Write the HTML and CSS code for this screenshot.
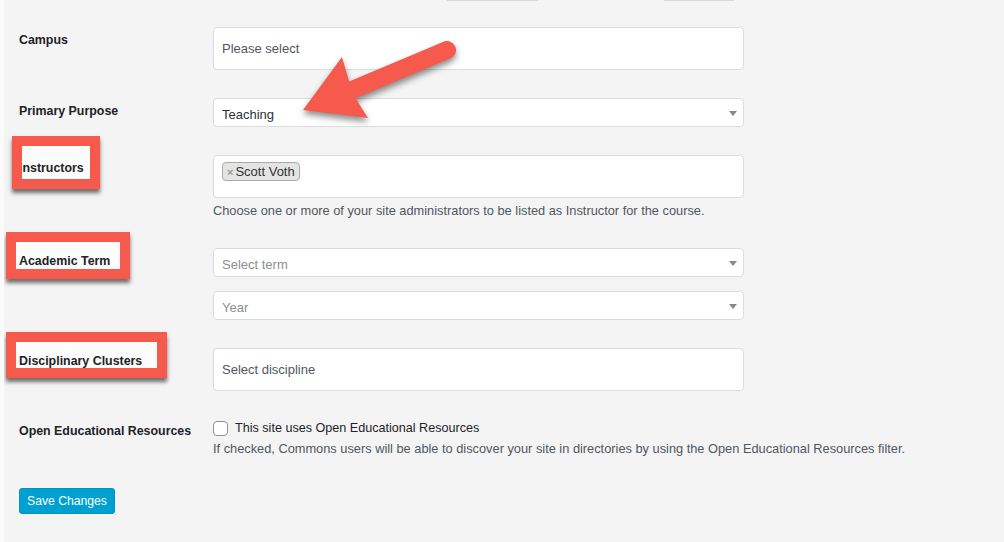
FILE: index.html
```html
<!DOCTYPE html>
<html lang="en">
<head>
    <meta charset="UTF-8">
    <meta name="viewport" content="width=device-width, initial-scale=1.0">
    <title>Course Settings</title>
    <link rel="stylesheet" href="styles.css">
</head>
<body>
    <div class="page">
        <div class="top-edges">
            <span class="edge edge-a"></span>
            <span class="edge edge-b"></span>
        </div>

        <form class="settings">
            <div class="row">
                <div class="label">Campus</div>
                <div class="field">
                    <div class="box tall"><span class="muted">Please select</span></div>
                </div>
            </div>

            <div class="row">
                <div class="label">Primary Purpose</div>
                <div class="field">
                    <div class="box select"><span class="value">Teaching</span><i class="caret"></i></div>
                </div>
            </div>

            <div class="row">
                <div class="label marked">
                    <span class="label-bg bg-instr"></span>
                    <span class="label-text">Instructors</span>
                    <span class="mark mark-instr"></span>
                </div>
                <div class="field">
                    <div class="box tall chips">
                        <span class="chip"><span class="chip-x">×</span>Scott Voth</span>
                    </div>
                    <p class="desc">Choose one or more of your site administrators to be listed as Instructor for the course.</p>
                </div>
            </div>

            <div class="row">
                <div class="label marked">
                    <span class="label-bg bg-term"></span>
                    <span class="label-text">Academic Term</span>
                    <span class="mark mark-term"></span>
                </div>
                <div class="field stack">
                    <div class="box select"><span class="placeholder">Select term</span><i class="caret"></i></div>
                    <div class="box select"><span class="placeholder">Year</span><i class="caret"></i></div>
                </div>
            </div>

            <div class="row">
                <div class="label marked">
                    <span class="label-bg bg-disc"></span>
                    <span class="label-text">Disciplinary Clusters</span>
                    <span class="mark mark-disc"></span>
                </div>
                <div class="field">
                    <div class="box tall"><span class="muted">Select discipline</span></div>
                </div>
            </div>

            <div class="row">
                <div class="label oer">Open Educational Resources</div>
                <div class="field">
                    <label class="check"><span class="checkbox"></span>This site uses Open Educational Resources</label>
                    <p class="desc desc-tight">If checked, Commons users will be able to discover your site in directories by using the Open Educational Resources filter.</p>
                </div>
            </div>

            <button type="button" class="save">Save Changes</button>
        </form>

        <svg class="arrow" width="1004" height="542" viewBox="0 0 1004 542">
            <line x1="447" y1="50" x2="352" y2="90" stroke="#f65a4d" stroke-width="18" stroke-linecap="round"/>
            <polygon points="303,110 342,57 349,81 356,99 368,118" fill="#f65a4d"/>
        </svg>
    </div>
</body>
</html>
```

FILE: styles.css
```css
* { box-sizing: border-box; }
body { margin: 0; background: #f4f4f4; font-family: "Liberation Sans", Arial, sans-serif; font-size: 13px; color: #1d2327; }
.page { position: relative; width: 1004px; height: 542px; overflow: hidden; border-left: 4px solid #fbfbfb; }

.top-edges { display: flex; height: 2px; }
.edge { display: block; height: 1px; background: #fff; border-bottom: 1px solid #d8d8d8; }
.edge-a { width: 91px; margin-left: 443px; }
.edge-b { width: 70px; margin-left: 126px; }

.settings { padding: 25px 0 0 15px; display: flex; flex-direction: column; gap: 28px; }
.row { display: grid; grid-template-columns: 194px 531px; }
.label { font-weight: bold; font-size: 12.4px; line-height: 18px; padding-top: 4px; white-space: nowrap; }
.label.oer { padding-top: 3px; }
.field { display: flex; flex-direction: column; }
.stack { gap: 14px; }

.box { background: #fff; border: 1px solid #dcdcde; border-radius: 4px; display: flex; align-items: center; padding: 0 8px; position: relative; }
.box.tall { height: 43px; }
.box.select { height: 29px; padding-top: 3px; }
.box.chips { align-items: flex-start; padding-top: 6px; }
.muted { color: #50575e; }
.placeholder { color: #8c8f94; }
.value { color: #2c3338; }
.caret { position: absolute; right: 6px; top: 12px; width: 0; height: 0; border-left: 4px solid transparent; border-right: 4px solid transparent; border-top: 5px solid #888; }

.chip { display: inline-flex; align-items: center; height: 19px; padding: 0 4px 0 4px; background: #e4e4e4; border: 1px solid #aaa; border-radius: 4px; color: #333; font-size: 13px; }
.chip-x { color: #999; font-size: 11px; font-weight: bold; margin-right: 2px; }

.desc { margin: 4px 0 0; color: #50575e; font-size: 12.8px; line-height: 18px; white-space: nowrap; }
.desc-tight { margin-top: 3px; }

.check { display: flex; align-items: center; gap: 7px; color: #1d2327; font-size: 12.6px; line-height: 18px; }
.checkbox { width: 15px; height: 15px; border: 1px solid #8c8f94; border-radius: 4px; background: #fff; }

.save { align-self: flex-start; margin-top: 2px; height: 26px; padding: 0 7px; background: #00a0d2; border: 1px solid #0094c2; border-radius: 3px; color: #fff; font-family: inherit; font-size: 12.2px; }

/* red annotation boxes */
.marked { position: relative; }
.label-text { position: relative; z-index: 1; }
.label-bg, .mark { position: absolute; }
.label-bg { background: #fcfcfc; z-index: 0; }
.mark { z-index: 2; border: 10px solid #f65a4d; box-shadow: 0 4px 4px rgba(0, 0, 0, 0.55); }
.mark-instr { left: -7px; top: -19px; width: 88px; height: 53px; }
.bg-instr { left: 3px; top: -9px; width: 68px; height: 33px; }
.mark-term { left: -13px; top: -16px; width: 124px; height: 47px; }
.bg-term { left: -3px; top: -6px; width: 104px; height: 27px; }
.mark-disc { left: -13px; top: -16px; width: 161px; height: 46px; }
.bg-disc { left: -3px; top: -6px; width: 141px; height: 26px; }

.arrow { position: absolute; left: -4px; top: 0; pointer-events: none; filter: drop-shadow(0 4px 3px rgba(0, 0, 0, 0.45)); }
```
